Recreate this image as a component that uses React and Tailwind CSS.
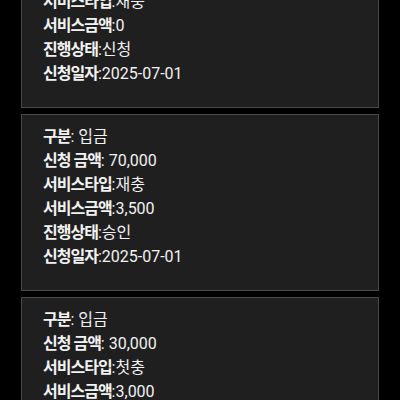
import React from "react";

const items = [
  { kind: "입금", amount: "50,000", type: "재충", svc: "0", status: "신청", date: "2025-07-01" },
  { kind: "입금", amount: "70,000", type: "재충", svc: "3,500", status: "승인", date: "2025-07-01" },
  { kind: "입금", amount: "30,000", type: "첫충", svc: "3,000", status: "승인", date: "2025-07-01" },
];

function Row({ label, value }) {
  return (
    <div className="h-[24px] leading-[24px] whitespace-nowrap">
      <span className="font-bold tracking-[-1px]">{label}</span>
      <span>{value}</span>
    </div>
  );
}

export default function App() {
  return (
    <div
      className="w-[400px] h-[400px] overflow-hidden bg-black text-[16px] text-[#f2f2f2]"
      style={{ fontFamily: 'Roboto, "Noto Sans CJK KR", sans-serif' }}
    >
      <div className="mt-[-69px] mx-[21px] flex flex-col gap-[6px]">
        {items.map((it, i) => (
          <div key={i} className="h-[177px] border border-[#4a4a4a] bg-[#1f1f1f] pl-[21px] pt-[10px]">
            <Row label="구분" value={`: ${it.kind}`} />
            <Row label="신청 금액" value={`: ${it.amount}`} />
            <Row label="서비스타입" value={`:${it.type}`} />
            <Row label="서비스금액" value={`:${it.svc}`} />
            <Row label="진행상태" value={`:${it.status}`} />
            <Row label="신청일자" value={`:${it.date}`} />
          </div>
        ))}
      </div>
    </div>
  );
}
